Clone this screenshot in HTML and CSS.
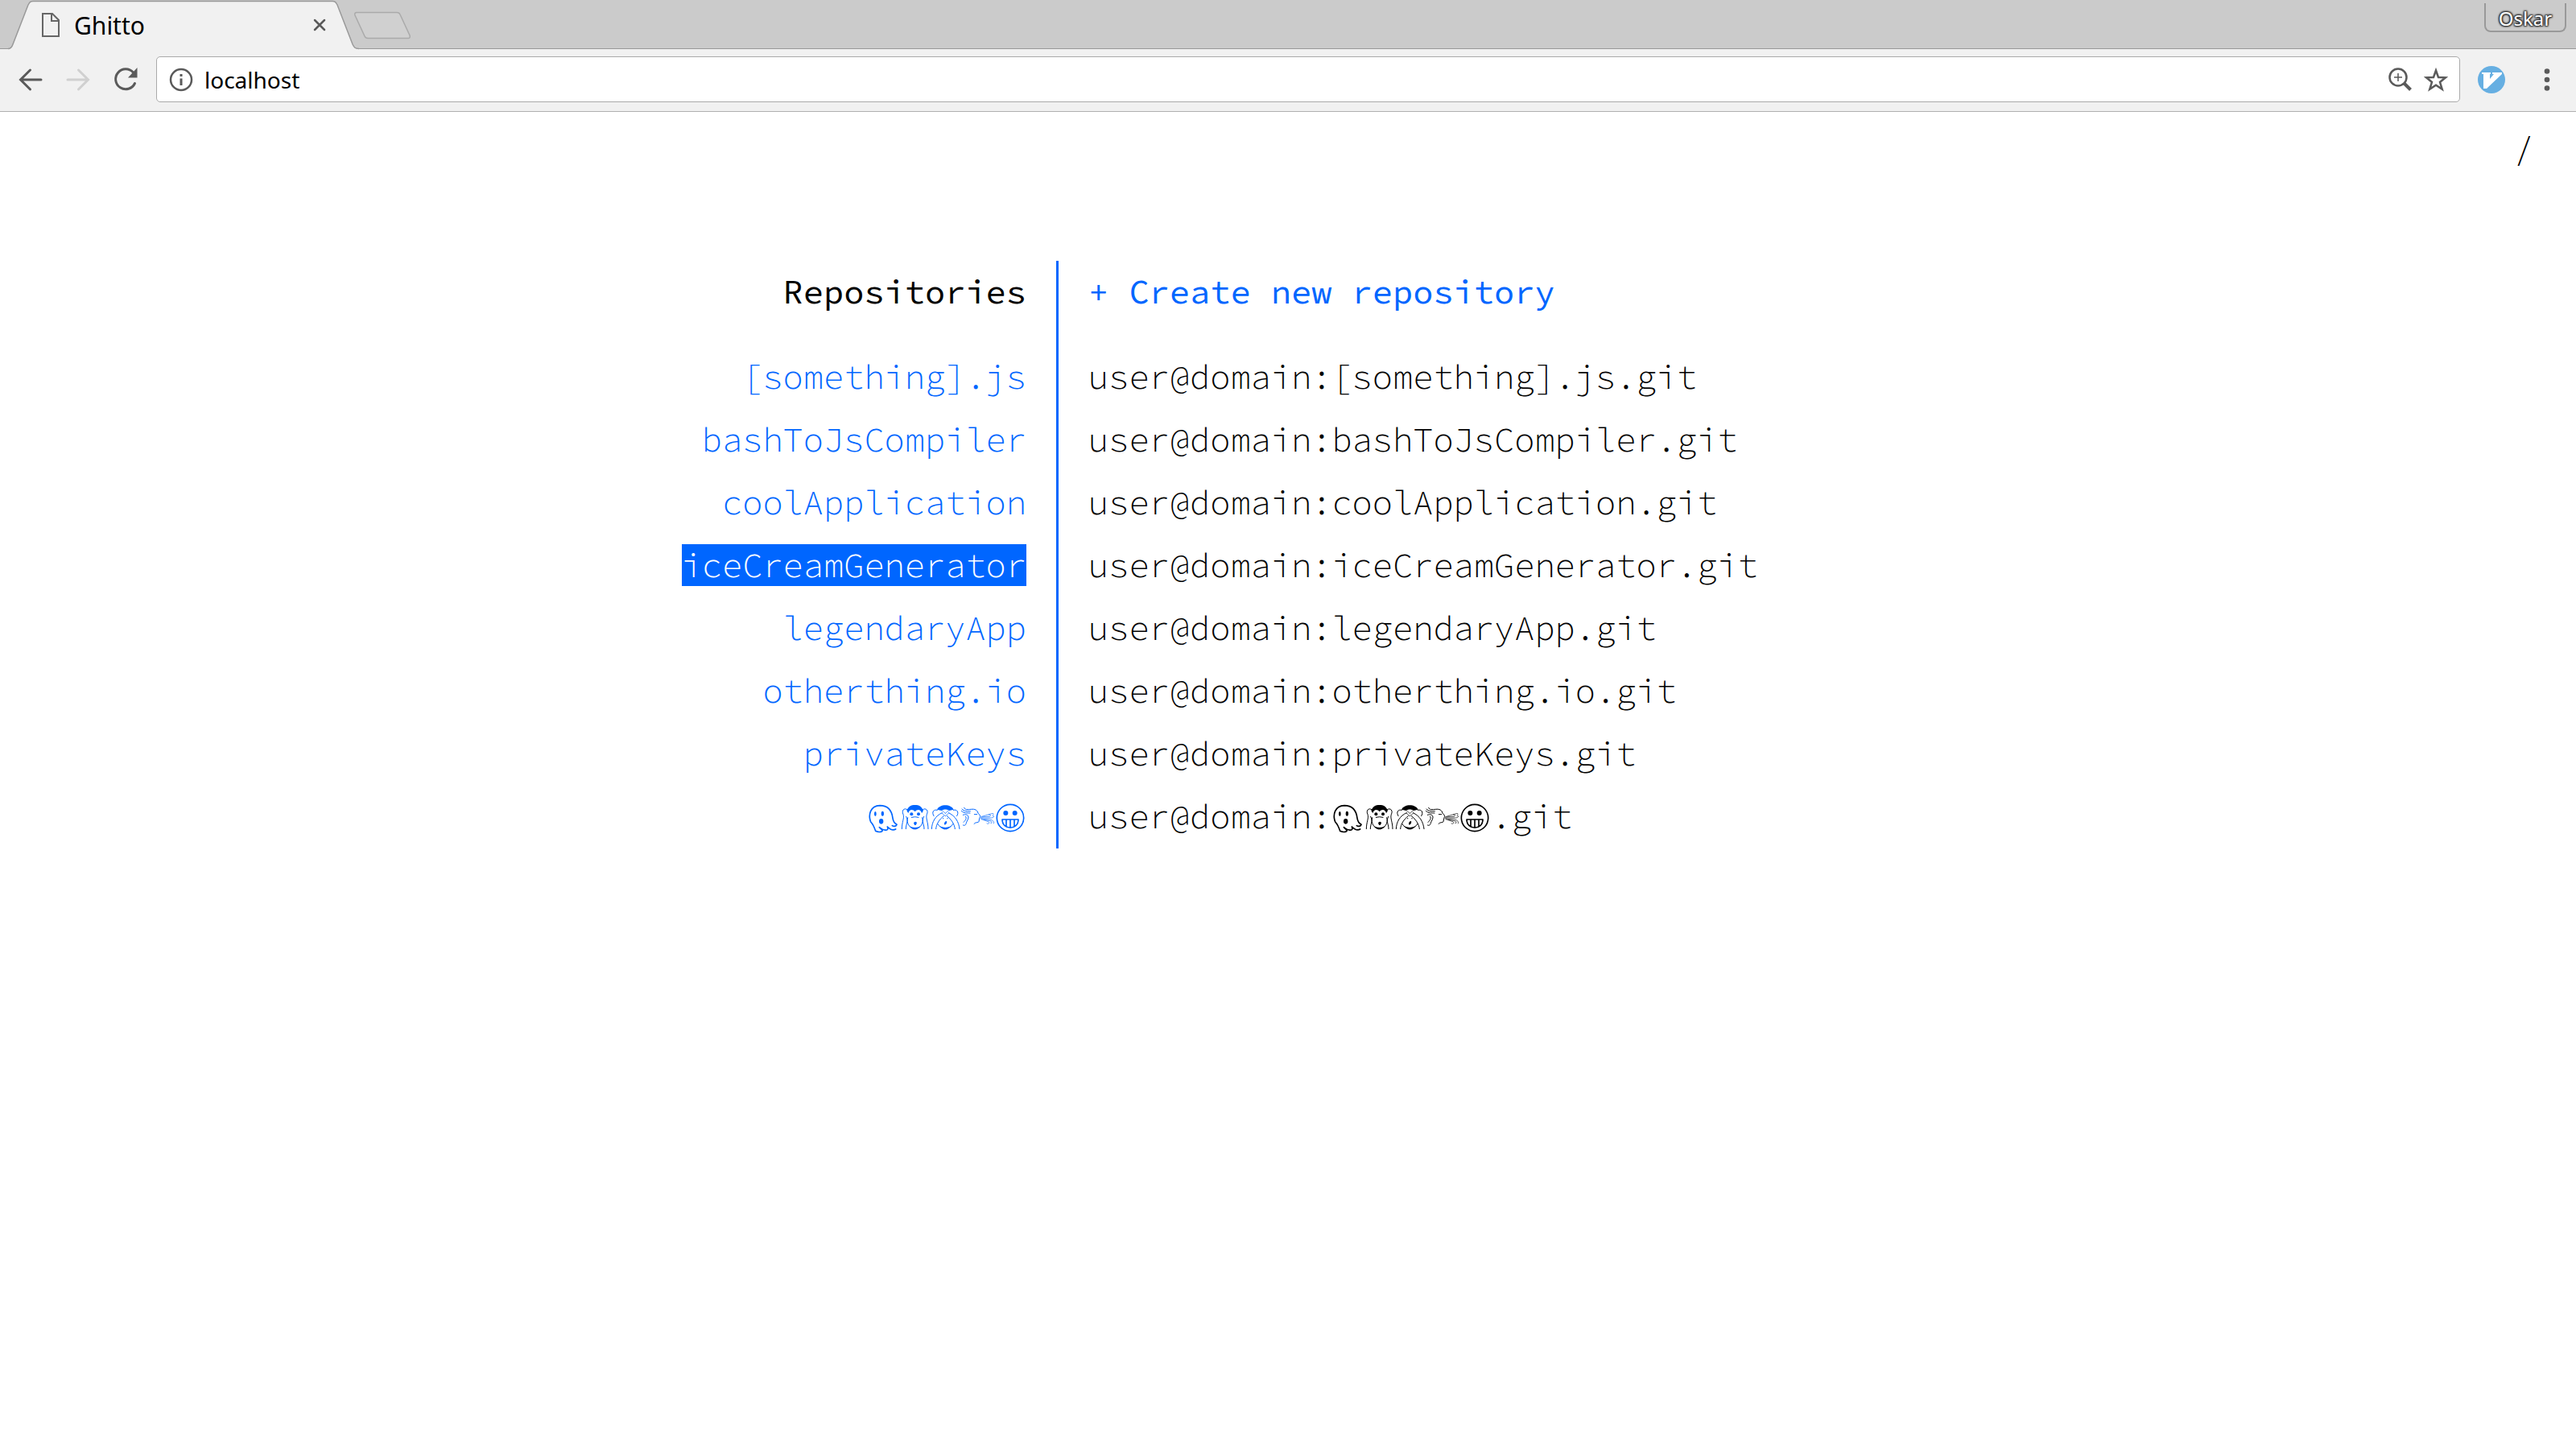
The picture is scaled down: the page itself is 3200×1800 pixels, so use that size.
FILE: index.html
```
<!DOCTYPE html>
<html lang="en">
<head>
<meta charset="utf-8">
<meta name="viewport" content="width=device-width, initial-scale=1">
<title>Ghitto</title>
<link rel="stylesheet" href="styles.css">
</head>
<body>
<svg class="symbols" aria-hidden="true">
  <symbol id="emoji-row" viewBox="112 78 594 114">
    <g fill="none" stroke="currentColor" stroke-width="5" stroke-linecap="round" stroke-linejoin="round">
      <!-- ghost -->
      <path d="M144 184C138 166 134 158 126 150C116 124 124 90 160 89C192 89 205 112 208 136C210 150 216 156 223 160C220 167 212 168 206 164M188 168C198 178 210 183 219 177M188 168C192 178 188 181 182 180C172 182 166 176 158 170C166 178 172 182 168 185C160 189 148 186 144 184"/>
      <!-- monkey covering its ears -->
      <g stroke-width="3">
        <path d="M264 134C258 154 270 175 291 175C312 175 324 154 318 134M262 104C250 96 240 108 247 122C252 136 242 150 242 176M257 176C256 160 268 148 258 130M320 104C332 96 342 108 335 122C330 136 340 150 340 176M325 176C326 160 314 148 324 130"/>
        <path d="M278 133Q291 129 304 133"/>
      </g>
      <!-- monkey covering its eyes -->
      <g stroke-width="3">
        <path d="M353 176C354 150 366 128 392 116M369 176C370 158 382 140 398 128M457 176C454 150 442 128 416 116M440 176C438 158 426 140 410 128M376 158C384 178 424 178 432 158M374 106C360 102 352 114 361 128M434 106C448 102 456 114 447 128"/>
        <path stroke-width="2" d="M392 108L404 118M416 108L404 118M392 118L404 128M416 118L404 128"/>
      </g>
      <!-- wind face -->
      <g stroke-width="3">
        <path d="M474 97C476 106 488 104 500 103C514 101 524 106 526 118C534 124 536 130 532 134C532 140 528 142 530 148C526 154 516 150 511 157M466 102C474 112 486 110 497 110M464 109C474 119 484 116 496 117M470 124C480 120 490 124 490 132C490 142 484 146 482 154C480 164 474 164 470 162M480 130C486 140 474 148 472 151M512 122H522"/>
        <path stroke-width="2" d="M536 132L568 130C576 128 572 120 566 123M536 135L576 135C588 134 586 124 580 127M538 138L570 141C582 144 588 150 584 156M538 140L562 148C572 152 566 160 559 156M540 130L574 120C584 116 586 122 582 123M548 142L574 147C580 152 577 157 573 154"/>
      </g>
      <!-- grinning face -->
      <circle cx="646" cy="135" r="50"/>
      <path d="M616 141H676C676 182 616 182 616 141ZM631 142V166M646 142V170M661 142V166"/>
    </g>
    <g fill="currentColor">
      <ellipse cx="143" cy="120" rx="4" ry="9"/>
      <ellipse cx="170" cy="119" rx="5" ry="9"/>
      <ellipse cx="165" cy="148" rx="8" ry="10"/>
      <path d="M260 108C266 92 276 87 291 87C306 87 316 92 322 108L316 118C314 104 300 100 291 112C282 100 268 104 266 118Z"/>
      <circle cx="278" cy="121" r="6"/>
      <circle cx="304" cy="121" r="6"/>
      <path d="M286 154Q290 146 298 152Q296 164 289 162Z"/>
      <path d="M270 166Q291 176 312 166Q300 180 291 178Q280 180 270 166Z"/>
      <path d="M373 104C382 82 426 82 435 104L418 108C412 102 396 102 390 108Z"/>
      <path d="M400 154Q406 144 410 149Q408 162 400 160Z"/>
      <path d="M382 166Q404 176 426 166Q414 180 404 178Q394 180 382 166Z"/>
      <circle cx="396" cy="137" r="2"/>
      <circle cx="412" cy="137" r="2"/>
      <circle cx="629" cy="117" r="9"/>
      <circle cx="663" cy="117" r="9"/>
    </g>
  </symbol>
</svg>

<header class="browser">
  <div class="tab-strip">
    <div class="tab">
      <svg class="tab-shape" viewBox="0 0 436 62" aria-hidden="true">
        <path d="M0 60.500C4 60.500 5 58 6 55L25 6C27 2.500 28 1.500 31 1.500H403C406 1.500 407 2.500 409 6L428 55C430 59 431 60.500 435 60.500V62H0Z" fill="#f1f1f1"/>
        <path d="M0 60.500C4 60.500 5 58 6 55L25 6C27 2.500 28 1.500 31 1.500H403C406 1.500 407 2.500 409 6L428 55C430 59 431 60.500 436 60.500" fill="none" stroke="#999" stroke-width="1.500"/>
      </svg>
      <svg class="page-icon" viewBox="0 0 22 30" aria-hidden="true"><path d="M1 1H13L21 9V29H1ZM12 1V10H21" fill="none" stroke="#666" stroke-width="2"/></svg>
      <span class="tab-title">Ghitto</span>
      <button class="tab-close" aria-label="Close tab"><svg width="16" height="16" viewBox="0 0 16 16"><path d="M2 2L14 14M14 2L2 14" stroke="#5a5a5a" stroke-width="2.500" stroke-linecap="round"/></svg></button>
    </div>
    <button class="new-tab" aria-label="New tab"><svg width="72" height="36" viewBox="0 0 72 36"><path d="M4 1.500H54Q57 1.500 58 4L70 30Q71 33.500 68 33.500H18Q15 33.500 14 31L2 5Q1 1.500 4 1.500Z" fill="#d0d0d0" stroke="#aaa" stroke-width="1.500"/></svg></button>
    <button class="profile">Oskar</button>
  </div>
  <div class="toolbar">
    <button aria-label="Back"><svg width="30" height="30" viewBox="0 0 30 30"><path d="M28 15H3M14.500 3L2.500 15L14.500 27" fill="none" stroke="#5a5a5a" stroke-width="3" stroke-linecap="round"/></svg></button>
    <button aria-label="Forward" disabled><svg width="30" height="30" viewBox="0 0 30 30"><path d="M2 15H27M15.500 3L27.500 15L15.500 27" fill="none" stroke="#d0d0d0" stroke-width="3" stroke-linecap="round"/></svg></button>
    <button aria-label="Reload"><svg width="30" height="30" viewBox="0 0 30 30"><path d="M24.500 6A12.500 12.500 0 1 0 26.500 19.500" fill="none" stroke="#5a5a5a" stroke-width="3" stroke-linecap="round"/><path d="M29.500 0V12.500H18Z" fill="#5a5a5a"/></svg></button>
    <div class="address">
      <svg width="30" height="30" viewBox="0 0 30 30" aria-hidden="true"><circle cx="15" cy="15" r="13" fill="none" stroke="#5a5a5a" stroke-width="2.500"/><path d="M13.500 8H16.500V11H13.500ZM13.500 13.500H16.500V22H13.500Z" fill="#5a5a5a"/></svg>
      <input type="text" value="localhost" aria-label="Address">
      <button aria-label="Zoom"><svg width="30" height="30" viewBox="0 0 30 30"><circle cx="12" cy="12" r="10.500" fill="none" stroke="#5a5a5a" stroke-width="2.500"/><path d="M12 7V17M7 12H17" stroke="#5a5a5a" stroke-width="1.500"/><path d="M19.500 19.500L27.500 27.500" stroke="#5a5a5a" stroke-width="4"/></svg></button>
      <button aria-label="Bookmark"><svg width="30" height="30" viewBox="0 0 30 30"><path d="M15 3.500L18 12L27 12.300L20 18L22.700 26.800L15 21.700L7.300 26.800L10 18L3 12.300L12 12Z" fill="none" stroke="#5a5a5a" stroke-width="2.500"/></svg></button>
    </div>
    <button class="extension" aria-label="Vimium"><svg width="34" height="34" viewBox="0 0 34 34"><circle cx="17" cy="17" r="17" fill="#66afe2"/><path d="M5 8H16V10H15V16L20 10H18V8H30V10L11 28H7V10H5Z" fill="#fff"/></svg></button>
    <button class="menu" aria-label="Menu"><svg width="8" height="28" viewBox="0 0 8 28"><g fill="#5a5a5a"><circle cx="4" cy="3.500" r="3.300"/><circle cx="4" cy="14" r="3.300"/><circle cx="4" cy="24.500" r="3.300"/></g></svg></button>
  </div>
</header>

<nav class="path"><a href="#">/</a></nav>

<main>
  <table class="repos">
    <thead>
      <tr><th scope="col">Repositories</th><th scope="col"><a href="#">+ Create new repository</a></th></tr>
    </thead>
    <tbody>
      <tr><td><a href="#">[something].js</a></td><td>user@domain:[something].js.git</td></tr>
      <tr><td><a href="#">bashToJsCompiler</a></td><td>user@domain:bashToJsCompiler.git</td></tr>
      <tr><td><a href="#">coolApplication</a></td><td>user@domain:coolApplication.git</td></tr>
      <tr><td><a class="active" href="#">iceCreamGenerator</a></td><td>user@domain:iceCreamGenerator.git</td></tr>
      <tr><td><a href="#">legendaryApp</a></td><td>user@domain:legendaryApp.git</td></tr>
      <tr><td><a href="#">otherthing.io</a></td><td>user@domain:otherthing.io.git</td></tr>
      <tr><td><a href="#">privateKeys</a></td><td>user@domain:privateKeys.git</td></tr>
      <tr><td><a href="#" aria-label="Emoji repository"><svg class="emoji"><use href="#emoji-row"/></svg></a></td><td>user@domain:<svg class="emoji" aria-hidden="true"><use href="#emoji-row"/></svg>.git</td></tr>
    </tbody>
  </table>
</main>
</body>
</html>
```
FILE: styles.css
```
* { box-sizing: border-box; }

body {
  margin: 0;
  background: #fff;
  color: #000;
  font-family: "Source Code Pro", "Liberation Mono", monospace;
  font-size: 42px;
}

a { color: inherit; text-decoration: none; }

button {
  display: flex;
  flex: none;
  padding: 0;
  border: 0;
  background: none;
}

svg { flex: none; }

.symbols { position: absolute; width: 0; height: 0; }

/* Browser frame */

.browser { font-family: "Noto Sans", sans-serif; }

.tab-strip {
  display: flex;
  height: 61px;
  padding: 0 12px 0 10px;
  background: #cbcbcb;
  border-bottom: 1px solid #999;
}

.tab {
  position: relative;
  display: flex;
  align-items: center;
  width: 436px;
  height: 62px;
  padding: 0 41px 0 42px;
}

.tab-shape {
  position: absolute;
  top: 0;
  left: 0;
  width: 436px;
  height: 62px;
}

.page-icon { position: relative; width: 22px; height: 30px; }

.tab-title {
  position: relative;
  flex: 1;
  padding: 1px 0 0 18px;
  font-size: 30px;
  line-height: 60px;
}

.tab-close { position: relative; }

.new-tab { align-self: center; margin-left: -7px; padding-top: 4px; }

.profile {
  justify-content: center;
  width: 102px;
  height: 36px;
  margin: 4px 0 0 auto;
  border: 2px solid #999;
  border-top: 0;
  border-radius: 0 0 8px 8px;
  color: #fff;
  font: 24px/38px "Noto Sans", sans-serif;
  text-shadow: 1px 1px 2px #333, -1px -1px 2px #333, 1px -1px 2px #333, -1px 1px 2px #333, 0 0 2px #333;
}

.toolbar {
  display: flex;
  align-items: center;
  gap: 29px;
  height: 78px;
  padding: 0 32px 2px 23px;
  background: #f1f1f1;
  border-bottom: 1px solid #b0b0b0;
}

.address {
  display: flex;
  flex: 1;
  align-items: center;
  gap: 14px;
  height: 57px;
  margin-left: -6px;
  padding: 0 14px 0 15px;
  background: #fff;
  border: 1px solid #aaa;
  border-radius: 5px;
}

.address input {
  flex: 1;
  min-width: 0;
  padding: 0;
  border: 0;
  outline: 0;
  background: none;
  color: #000;
  font: 28px/40px "Noto Sans", sans-serif;
}

.extension { margin-left: -7px; }

.menu { margin-left: 19px; }

/* Repository page */

.path {
  padding: 0 52px;
  font-weight: 300;
  line-height: 90px;
  text-align: right;
}

.repos {
  width: 100%;
  margin-top: 95px;
  border-spacing: 0;
  table-layout: fixed;
  line-height: 76px;
}

.repos th,
.repos td {
  height: 78px;
  padding: 0;
  font-weight: 300;
  vertical-align: top;
  white-space: nowrap;
}

.repos th { height: 106px; font-weight: 400; }

.repos th:first-child,
.repos td:first-child {
  width: 41%;
  padding-right: 37px;
  text-align: right;
}

.repos th:last-child,
.repos td:last-child {
  padding-left: 37px;
  border-left: 3px solid #06f;
  text-align: left;
}

.repos a { color: #06f; }

.repos a.active {
  background: #06f;
  color: #fff;
}

.emoji {
  width: 198px;
  height: 38px;
  vertical-align: -6px;
}
```
